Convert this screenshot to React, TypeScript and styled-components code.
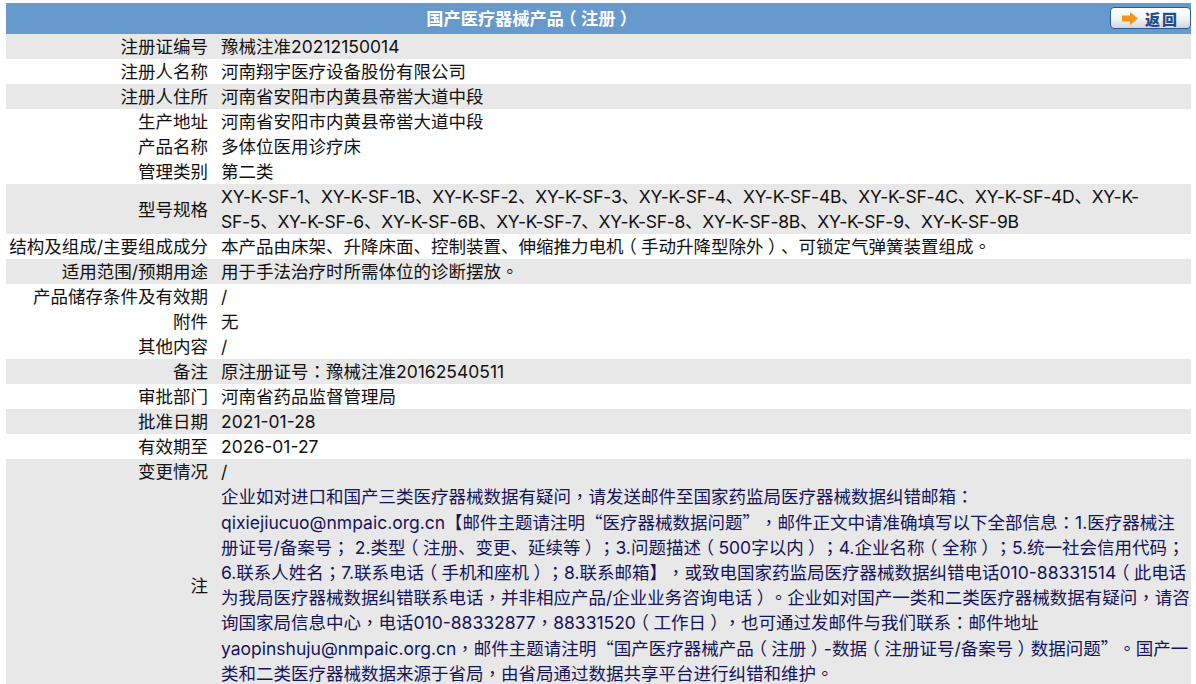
import React from 'react'
import styled, { createGlobalStyle } from 'styled-components'

const GlobalStyle = createGlobalStyle`
  html, body {
    margin: 0;
    padding: 0;
    background: #ffffff;
    overflow: hidden;
  }
  body {
    font-family: Inter, "Noto Sans CJK SC", sans-serif;
  }
`

const Page = styled.div`
  padding: 3px 5px 0 6px;
`

const Table = styled.table`
  width: 100%;
  border-collapse: collapse;
  table-layout: fixed;
  font-size: 17.5px;
  line-height: 25px;
  color: #111111;
  text-spacing-trim: space-all;
  text-autospace: no-autospace;
`

const HeaderRow = styled.tr`
  background: #6699cc;
`

const HeaderCell = styled.th`
  height: 31px;
  padding: 0 138px 0 0;
  position: relative;
  color: #ffffff;
  font-size: 17.2px;
  font-weight: bold;
  text-align: center;
`

const BackButton = styled.button`
  position: absolute;
  top: 4px;
  right: 0;
  width: 81px;
  height: 22px;
  padding: 0;
  display: flex;
  align-items: center;
  justify-content: center;
  gap: 7px;
  border: 1px solid #2a5a96;
  border-radius: 4px;
  background: linear-gradient(#ffffff, #f4f4f4 50%, #d2d6da);
  color: #1f4e8c;
  font-family: "Noto Sans CJK SC", sans-serif;
  font-size: 15px;
  font-weight: 900;
  letter-spacing: 2px;
`

const Row = styled.tr<{ $shaded?: boolean }>`
  background: ${(p) => (p.$shaded ? '#e8e8e8' : '#ffffff')};
`

const Label = styled.td`
  padding: 0 7px 0 0;
  text-align: right;
  white-space: nowrap;
`

const Value = styled.td<{ $note?: boolean; $tight?: boolean }>`
  padding: 0 0 0 6px;
  color: ${(p) => (p.$note ? '#14145a' : 'inherit')};
  letter-spacing: ${(p) => (p.$tight ? '-0.26px' : 'normal')};
  white-space: pre-line;
`

// full-width punctuation sits in the middle of its box in the reference
const Centered = styled.span`
  font-family: "Noto Sans CJK TC", sans-serif;
  line-height: 0;
`

const Quote = styled.span`
  font-family: "Noto Sans CJK SC", sans-serif;
`

const Paren = styled.span<{ $close?: boolean }>`
  position: relative;
  left: ${(p) => (p.$close ? '0.25em' : '-0.25em')};
`

const withPunct = (text: string) =>
  text.split(/([，；：。（）“”])/).map((part, i) => {
    if (part === '（') return <Paren key={i}>{part}</Paren>
    if (part === '）') return <Paren key={i} $close>{part}</Paren>
    if (part === '“' || part === '”') return <Quote key={i}>{part}</Quote>
    if (/^[，；：。]$/.test(part)) return <Centered key={i}>{part}</Centered>
    return part
  })

const rows: { label: string; value: string; shaded?: boolean; tight?: boolean }[] = [
  { label: '注册证编号', value: '豫械注准20212150014', shaded: true },
  { label: '注册人名称', value: '河南翔宇医疗设备股份有限公司' },
  { label: '注册人住所', value: '河南省安阳市内黄县帝喾大道中段', shaded: true },
  { label: '生产地址', value: '河南省安阳市内黄县帝喾大道中段' },
  { label: '产品名称', value: '多体位医用诊疗床' },
  { label: '管理类别', value: '第二类' },
  {
    label: '型号规格',
    value:
      'XY-K-SF-1、XY-K-SF-1B、XY-K-SF-2、XY-K-SF-3、XY-K-SF-4、XY-K-SF-4B、XY-K-SF-4C、XY-K-SF-4D、XY-K-\nSF-5、XY-K-SF-6、XY-K-SF-6B、XY-K-SF-7、XY-K-SF-8、XY-K-SF-8B、XY-K-SF-9、XY-K-SF-9B',
    shaded: true,
    tight: true,
  },
  {
    label: '结构及组成/主要组成成分',
    value: '本产品由床架、升降床面、控制装置、伸缩推力电机（手动升降型除外）、可锁定气弹簧装置组成。',
  },
  { label: '适用范围/预期用途', value: '用于手法治疗时所需体位的诊断摆放。', shaded: true },
  { label: '产品储存条件及有效期', value: '/' },
  { label: '附件', value: '无' },
  { label: '其他内容', value: '/' },
  { label: '备注', value: '原注册证号：豫械注准20162540511', shaded: true },
  { label: '审批部门', value: '河南省药品监督管理局' },
  { label: '批准日期', value: '2021-01-28', shaded: true },
  { label: '有效期至', value: '2026-01-27' },
  { label: '变更情况', value: '/', shaded: true },
]

const note =
  '企业如对进口和国产三类医疗器械数据有疑问，请发送邮件至国家药监局医疗器械数据纠错邮箱：qixiejiucuo@nmpaic.org.cn【邮件主题请注明“医疗器械数据问题”，邮件正文中请准确填写以下全部信息：1.医疗器械注册证号/备案号； 2.类型（注册、变更、延续等）；3.问题描述（500字以内）；4.企业名称（全称）；5.统一社会信用代码；6.联系人姓名；7.联系电话（手机和座机）；8.联系邮箱】，或致电国家药监局医疗器械数据纠错电话010-88331514（此电话为我局医疗器械数据纠错联系电话，并非相应产品/企业业务咨询电话）。企业如对国产一类和二类医疗器械数据有疑问，请咨询国家局信息中心，电话010-88332877，88331520（工作日），也可通过发邮件与我们联系：邮件地址 yaopinshuju@nmpaic.org.cn，邮件主题请注明“国产医疗器械产品（注册）-数据（注册证号/备案号）数据问题”。国产一类和二类医疗器械数据来源于省局，由省局通过数据共享平台进行纠错和维护。'

const App: React.FC = () => {
  return (
    <Page>
      <GlobalStyle />
      <Table>
        <colgroup>
          <col style={{ width: 209 }} />
          <col />
        </colgroup>
        <tbody>
          <HeaderRow>
            <HeaderCell colSpan={2}>
              国产医疗器械产品{withPunct('（')}注册{withPunct('）')}
              <BackButton>
                <svg width="16" height="13" viewBox="0 0 16 13">
                  <path d="M0 3.5h8V0l8 6.5-8 6.5V9.5H0z" fill="#f0951c" />
                </svg>
                返回
              </BackButton>
            </HeaderCell>
          </HeaderRow>
          {rows.map((r) => (
            <Row key={r.label} $shaded={r.shaded}>
              <Label>{r.label}</Label>
              <Value $tight={r.tight}>{withPunct(r.value)}</Value>
            </Row>
          ))}
          <Row $shaded>
            <Label>注</Label>
            <Value $note>{withPunct(note)}</Value>
          </Row>
        </tbody>
      </Table>
    </Page>
  )
}

export default App
